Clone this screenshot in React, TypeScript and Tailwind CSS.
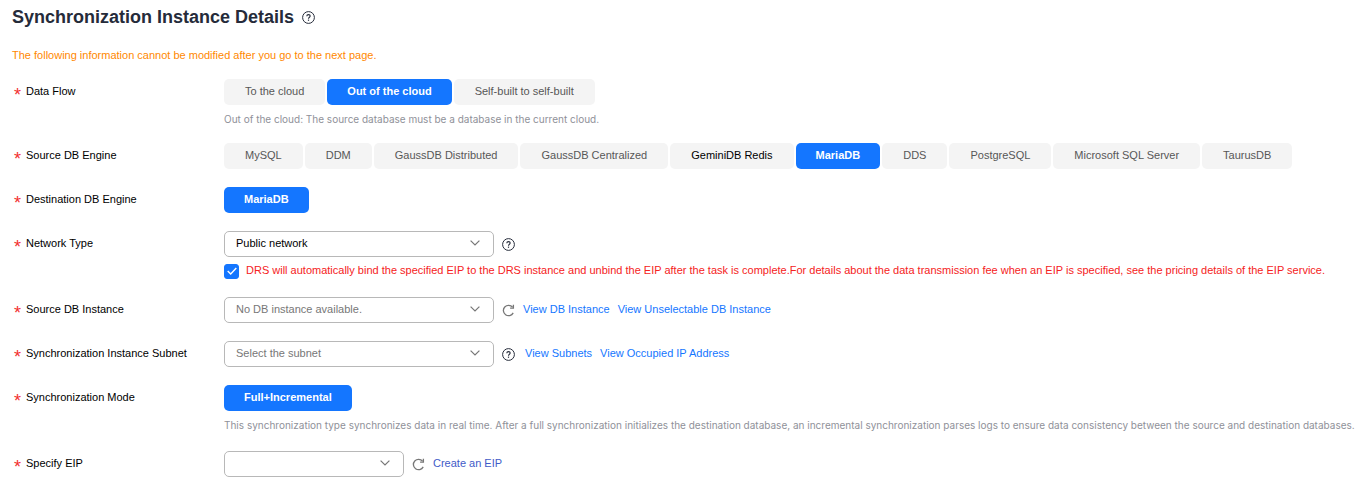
import React, { useState } from 'react';
import clsx from 'clsx';

interface Option {
  label: string;
  highlighted?: boolean;
}

const dataFlows: Option[] = [
  { label: 'To the cloud' },
  { label: 'Out of the cloud' },
  { label: 'Self-built to self-built' },
];

const sourceEngines: Option[] = [
  { label: 'MySQL' },
  { label: 'DDM' },
  { label: 'GaussDB Distributed' },
  { label: 'GaussDB Centralized' },
  { label: 'GeminiDB Redis', highlighted: true },
  { label: 'MariaDB' },
  { label: 'DDS' },
  { label: 'PostgreSQL' },
  { label: 'Microsoft SQL Server' },
  { label: 'TaurusDB' },
];

const HelpButton: React.FC<{ label: string }> = ({ label }) => (
  <button type="button" aria-label={label} className="shrink-0 text-[#252b3a]">
    <svg viewBox="0 0 13 13" className="w-[13px] h-[13px]" fill="none" stroke="currentColor">
      <circle cx="6.5" cy="6.5" r="5.9" strokeWidth="1" />
      <path d="M4.8 5.3C4.8 4.2 5.5 3.6 6.5 3.6S8.2 4.2 8.2 5.1C8.2 6.2 6.5 6.3 6.5 7.7" strokeWidth="1.1" />
      <path d="M6.5 8.6V9.8" strokeWidth="1.2" />
    </svg>
  </button>
);

const RefreshButton: React.FC<{ label: string }> = ({ label }) => (
  <button type="button" aria-label={label} className="shrink-0 text-[#777]">
    <svg viewBox="0 0 13 13" className="w-[13px] h-[13px]" fill="none" stroke="currentColor" strokeWidth="1.3">
      <path d="M10.6 3.2A5.2 5.2 0 1 0 11.2 8.9" />
      <path d="M11.4 0.8V4.1H8.1" />
    </svg>
  </button>
);

interface RowProps {
  label: string;
  htmlFor?: string;
  children: React.ReactNode;
}

const Row: React.FC<RowProps> = ({ label, htmlFor, children }) => {
  const content = (
    <>
      <span className="w-3 pt-2 text-lg leading-4 text-[#f23030]" aria-hidden="true">*</span>
      {label}
    </>
  );
  const classes = 'flex w-[210px] h-[26px] shrink-0 items-center pb-[2px] text-black';

  return (
    <div className="flex items-start">
      {htmlFor ? (
        <label htmlFor={htmlFor} className={classes}>{content}</label>
      ) : (
        <div className={classes}>{content}</div>
      )}
      <div className="min-w-0 flex-1">{children}</div>
    </div>
  );
};

const Hint: React.FC<{ children: React.ReactNode }> = ({ children }) => (
  <p className="mt-[6px] font-[Inter,Arial,sans-serif] text-[10px] leading-4 text-[#8f9199]">{children}</p>
);

interface ButtonGroupProps {
  label: string;
  options: Option[];
  initial: string;
}

const ButtonGroup: React.FC<ButtonGroupProps> = ({ label, options, initial }) => {
  const [selected, setSelected] = useState(initial);

  return (
    <div role="group" aria-label={label} className="flex flex-wrap gap-[2px]">
      {options.map((option) => (
        <button
          key={option.label}
          type="button"
          aria-pressed={selected === option.label}
          onClick={() => setSelected(option.label)}
          className={clsx(
            'h-[26px] rounded-[5px] pb-[2px] whitespace-nowrap',
            selected === option.label
              ? 'bg-[#1476ff] px-5 font-bold text-white'
              : option.highlighted
                ? 'bg-[#f4f4f4] px-[21px] text-black'
                : 'bg-[#f4f4f4] px-[21px] text-[#575757]'
          )}
        >
          {option.label}
        </button>
      ))}
    </div>
  );
};

interface SelectBoxProps {
  id: string;
  value: string;
  muted?: boolean;
  narrow?: boolean;
}

const SelectBox: React.FC<SelectBoxProps> = ({ id, value, muted, narrow }) => (
  <div className={clsx('grid shrink-0 items-center', narrow ? 'w-[180px]' : 'w-[270px]')}>
    <select
      id={id}
      className={clsx(
        'col-start-1 row-start-1 h-[26px] w-full appearance-none rounded-[5px] border border-[#b8b8b8] bg-white pl-[11px] pr-8 pb-[2px]',
        muted ? 'text-[#777]' : 'text-black'
      )}
    >
      <option>{value}</option>
    </select>
    <svg
      viewBox="0 0 10 6"
      className="pointer-events-none col-start-1 row-start-1 mr-[14px] mb-[2px] h-[6px] w-[10px] justify-self-end"
      fill="none"
      stroke="#777"
      strokeWidth="1.2"
    >
      <path d="M0.6 0.6L5 5L9.4 0.6" />
    </svg>
  </div>
);

const TextLink: React.FC<{ children: string; indigo?: boolean }> = ({ children, indigo }) => (
  <a href="#" className={clsx('pb-[2px] whitespace-nowrap', indigo ? 'text-[#3f5bc8]' : 'text-[#1476ff]')}>
    {children}
  </a>
);

export default function App() {
  const [bindEip, setBindEip] = useState(true);

  return (
    <main className="bg-white pt-[7px] pb-1 pl-3 font-['Liberation_Sans',Arial,sans-serif] text-[11px] leading-4">
      <header className="flex items-center gap-2">
        <h1 className="text-lg leading-5 font-bold text-[#252b3a]">Synchronization Instance Details</h1>
        <HelpButton label="About synchronization instances" />
      </header>
      <p className="mt-5 text-[#ff8800]">The following information cannot be modified after you go to the next page.</p>

      <form className="mt-4 flex flex-col gap-4 pl-[2px]">
        <Row label="Data Flow">
          <ButtonGroup label="Data Flow" options={dataFlows} initial="Out of the cloud" />
          <Hint>Out of the cloud: The source database must be a database in the current cloud.</Hint>
        </Row>

        <div className="flex flex-col gap-[18px]">
          <Row label="Source DB Engine">
            <ButtonGroup label="Source DB Engine" options={sourceEngines} initial="MariaDB" />
          </Row>

          <Row label="Destination DB Engine">
            <ButtonGroup label="Destination DB Engine" options={[{ label: 'MariaDB' }]} initial="MariaDB" />
          </Row>

          <Row label="Network Type" htmlFor="network">
            <div className="flex items-center gap-2">
              <SelectBox id="network" value="Public network" />
              <HelpButton label="About network types" />
            </div>
            <div className="mt-[6px] flex items-center gap-[7px]">
              <span className="grid shrink-0 items-center justify-items-center">
                <input
                  id="bind-eip"
                  type="checkbox"
                  checked={bindEip}
                  onChange={(e) => setBindEip(e.target.checked)}
                  className="col-start-1 row-start-1 h-[15px] w-[15px] appearance-none rounded-[3px] border border-[#b8b8b8] checked:border-[#1476ff] checked:bg-[#1476ff]"
                />
                <svg
                  viewBox="0 0 10 8"
                  className="pointer-events-none col-start-1 row-start-1 h-2 w-[10px]"
                  fill="none"
                  stroke="white"
                  strokeWidth="1.4"
                >
                  <path d="M0.7 3.9L3.7 6.9L9.3 1" />
                </svg>
              </span>
              <label htmlFor="bind-eip" className="pb-[2px] leading-[14px] text-[#f52222]">
                DRS will automatically bind the specified EIP to the DRS instance and unbind the EIP after the task is
                complete.For details about the data transmission fee when an EIP is specified, see the pricing details
                of the EIP service.
              </label>
            </div>
          </Row>

          <Row label="Source DB Instance" htmlFor="source-instance">
            <div className="flex items-center gap-2">
              <SelectBox id="source-instance" value="No DB instance available." muted />
              <RefreshButton label="Refresh DB instances" />
              <div className="flex gap-2">
                <TextLink>View DB Instance</TextLink>
                <TextLink>View Unselectable DB Instance</TextLink>
              </div>
            </div>
          </Row>

          <Row label="Synchronization Instance Subnet" htmlFor="subnet">
            <div className="flex items-center gap-2">
              <SelectBox id="subnet" value="Select the subnet" muted />
              <HelpButton label="About subnets" />
              <div className="flex gap-2 pl-[2px]">
                <TextLink>View Subnets</TextLink>
                <TextLink>View Occupied IP Address</TextLink>
              </div>
            </div>
          </Row>

          <Row label="Synchronization Mode">
            <ButtonGroup
              label="Synchronization Mode"
              options={[{ label: 'Full+Incremental' }]}
              initial="Full+Incremental"
            />
            <Hint>
              This synchronization type synchronizes data in real time. After a full synchronization initializes the
              destination database, an incremental synchronization parses logs to ensure data consistency between the
              source and destination databases.
            </Hint>
          </Row>

          <Row label="Specify EIP" htmlFor="eip">
            <div className="flex items-center gap-2">
              <SelectBox id="eip" value="" narrow />
              <RefreshButton label="Refresh EIPs" />
              <TextLink indigo>Create an EIP</TextLink>
            </div>
          </Row>
        </div>
      </form>
    </main>
  );
}
